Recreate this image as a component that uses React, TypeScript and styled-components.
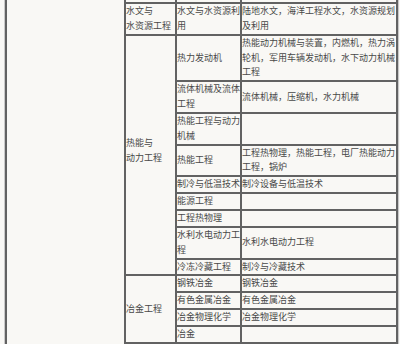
import React from 'react';
import styled, { createGlobalStyle } from 'styled-components';

const GlobalStyle = createGlobalStyle`
  html, body {
    margin: 0;
    padding: 0;
    background: #f9f8f5;
    overflow: hidden;
  }
`;

const Page = styled.div`
  width: 400px;
  height: 344px;
  overflow: hidden;
  background: #f9f8f5;
`;

const Frame = styled.div`
  margin-left: 4px;
  width: 393px;
  border-left: 1px solid #c9c9c9;
  border-right: 1px solid #c9c9c9;
`;

const Table = styled.table`
  border-collapse: collapse;
  table-layout: fixed;
  width: 391px;
  font-family: 'Noto Sans CJK SC', 'Noto Sans', sans-serif;
  font-size: 9px;
  line-height: 14.85px;
  color: #484848;
`;

const Column = styled.col<{ w: number }>`
  width: ${({ w }) => w}px;
`;

const Cell = styled.td<{ lift?: number }>`
  border: 2px solid #626262;
  padding: 0 0 ${({ lift }) => lift || 0}px 0;
  vertical-align: middle;
  word-break: break-all;
  white-space: normal;
`;

const TopCell = styled(Cell)`
  border-top: none;
  height: 2px;
  line-height: 2px;
`;

const BlankCell = styled.td`
  border: 2px solid #626262;
  border-top: none;
  padding: 0;
`;

interface RowData {
  major: string;
  detail: string;
}

const thermal: RowData[] = [
  { major: '热力发动机', detail: '热能动力机械与装置，内燃机，热力涡轮机，军用车辆发动机，水下动力机械工程' },
  { major: '流体机械及流体工程', detail: '流体机械，压缩机，水力机械' },
  { major: '热能工程与动力机械', detail: '' },
  { major: '热能工程', detail: '工程热物理，热能工程，电厂热能动力工程，锅炉' },
  { major: '制冷与低温技术', detail: '制冷设备与低温技术' },
  { major: '能源工程', detail: '' },
  { major: '工程热物理', detail: '' },
  { major: '水利水电动力工程', detail: '水利水电动力工程' },
  { major: '冷冻冷藏工程', detail: '制冷与冷藏技术' },
];

const metal: RowData[] = [
  { major: '钢铁冶金', detail: '钢铁冶金' },
  { major: '有色金属冶金', detail: '有色金属冶金' },
  { major: '冶金物理化学', detail: '冶金物理化学' },
  { major: '冶金', detail: '' },
];

const App = () => {
  const total = 2 + thermal.length + metal.length + 1;
  return (
    <Page>
      <GlobalStyle />
      <Frame>
        <Table>
          <colgroup>
            <Column w={119} />
            <Column w={51} />
            <Column w={65} />
            <Column w={156} />
          </colgroup>
          <tbody>
            <tr>
              <BlankCell rowSpan={total} />
              <TopCell />
              <TopCell />
              <TopCell />
            </tr>
            <tr>
              <Cell>
                水文与
                <br />
                水资源工程
              </Cell>
              <Cell>水文与水资源利用</Cell>
              <Cell>陆地水文，海洋工程水文，水资源规划及利用</Cell>
            </tr>
            {thermal.map((r, i) => (
              <tr key={r.major}>
                {i === 0 && (
                  <Cell rowSpan={thermal.length} lift={8}>
                    热能与
                    <br />
                    动力工程
                  </Cell>
                )}
                <Cell>{r.major}</Cell>
                <Cell>{r.detail}</Cell>
              </tr>
            ))}
            {metal.map((r, i) => (
              <tr key={r.major}>
                {i === 0 && <Cell rowSpan={metal.length}>冶金工程</Cell>}
                <Cell>{r.major}</Cell>
                <Cell>{r.detail}</Cell>
              </tr>
            ))}
            <tr>
              <Cell>&nbsp;</Cell>
              <Cell>&nbsp;</Cell>
              <Cell>&nbsp;</Cell>
            </tr>
          </tbody>
        </Table>
      </Frame>
    </Page>
  );
};

export default App;
